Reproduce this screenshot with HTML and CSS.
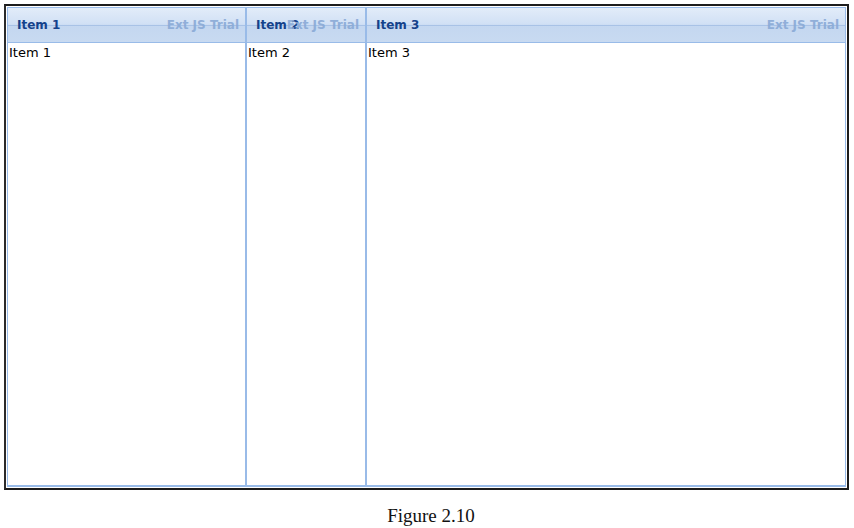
FILE: index.html
```html
<!DOCTYPE html>
<html>
<head>
<meta charset="utf-8">
<link rel="stylesheet" href="styles.css">
</head>
<body>
<div class="page">
  <div class="frame">
    <div class="hbox">
      <div class="panel p1">
        <div class="header"><span class="title">Item 1</span><span class="trial">Ext JS Trial</span></div>
        <div class="body">Item 1</div>
      </div>
      <div class="panel p2">
        <div class="header"><span class="title">Item 2</span><span class="trial">Ext JS Trial</span></div>
        <div class="body">Item 2</div>
      </div>
      <div class="panel p3">
        <div class="header"><span class="title">Item 3</span><span class="trial">Ext JS Trial</span></div>
        <div class="body">Item 3</div>
      </div>
    </div>
  </div>
  <div class="caption">Figure 2.10</div>
</div>
</body>
</html>
```
FILE: styles.css
```css
html, body {
  margin: 0;
  padding: 0;
  background: #ffffff;
}
.page {
  width: 854px;
  height: 528px;
  padding: 4px 0 0 4px;
  box-sizing: border-box;
}
.frame {
  width: 845px;
  height: 486px;
  box-sizing: border-box;
  border: 2px solid #1c1c1c;
  border-left-color: #2a2a2a;
  padding: 1px 1px 1px 1px;
  background: #ffffff;
}
.hbox {
  display: flex;
  height: 100%;
}
.panel {
  display: flex;
  flex-direction: column;
  box-sizing: border-box;
  border: 1px solid #99bbe8;
  border-bottom: 2px solid #99bbe8;
}
.p1 { width: 239px; }
.p2 { width: 120px; border-left: 1px solid #99bbe8; }
.p3 { flex: 1; border-left: 1px solid #99bbe8; }
.header {
  position: relative;
  height: 35px;
  box-sizing: border-box;
  border-bottom: 1px solid #99bbe8;
  background: linear-gradient(to bottom, #e2ecf9 0%, #d2e1f5 45%, #c4d7f0 55%, #c8daf1 100%);
  display: flex;
  align-items: center;
  padding-left: 9px;
  font-family: "DejaVu Sans", Verdana, sans-serif;
  font-weight: bold;
  font-size: 12px;
}
.header::before {
  content: "";
  position: absolute;
  left: 0;
  right: 0;
  top: 17px;
  height: 1px;
  background: #a8c2e6;
}
.title {
  position: relative;
  color: #15428b;
}
.trial {
  position: absolute;
  right: 6px;
  top: 0;
  line-height: 34px;
  color: #8aaad6;
  opacity: 0.9;
}
.body {
  flex: 1;
  background: #ffffff;
  font-family: "DejaVu Sans", Verdana, sans-serif;
  font-size: 13px;
  color: #000000;
  padding: 2px 0 0 1px;
  line-height: 16px;
}
.caption {
  width: 854px;
  text-align: center;
  font-family: "Liberation Serif", "Times New Roman", serif;
  font-size: 19px;
  color: #111111;
  margin-top: 15px;
}
```
